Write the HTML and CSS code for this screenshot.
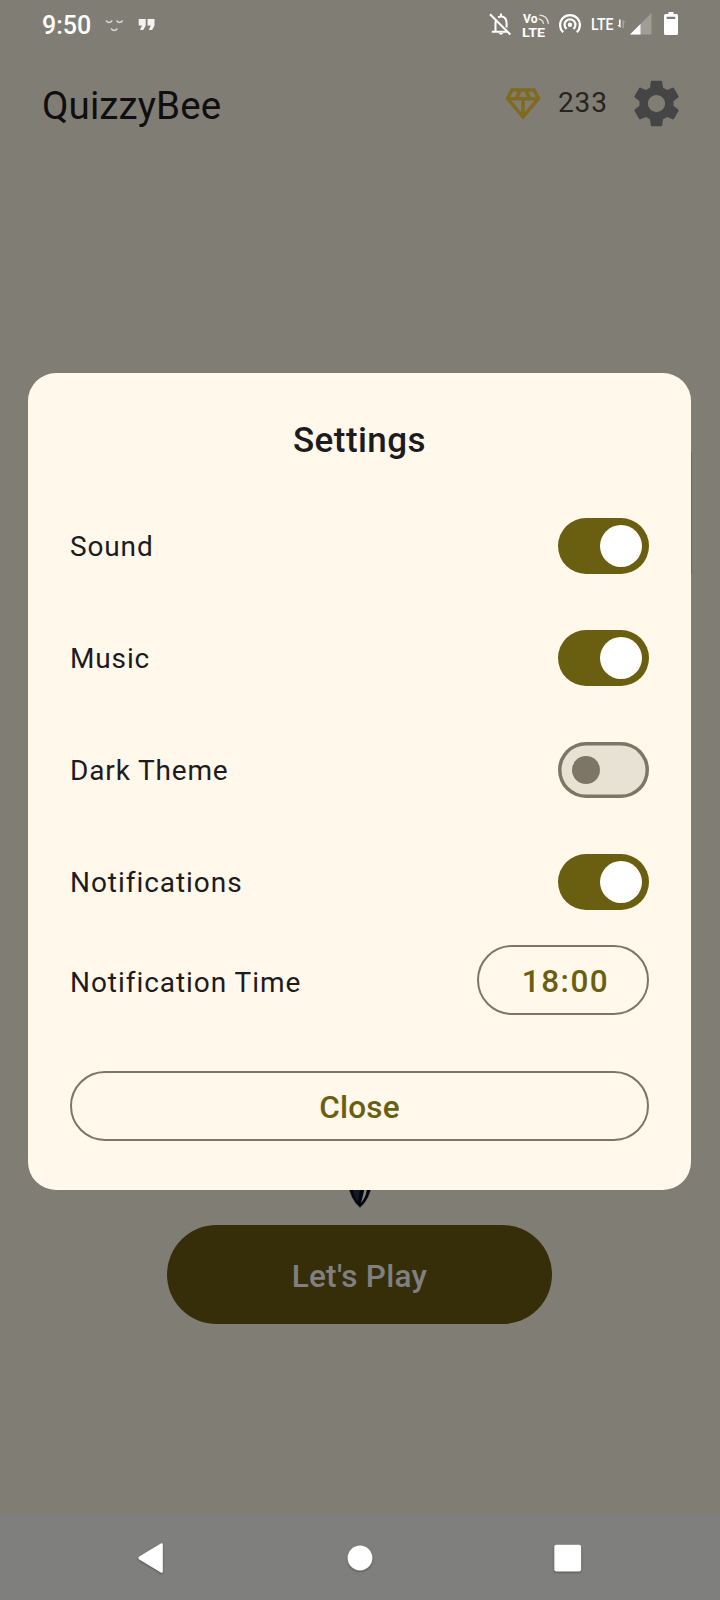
FILE: index.html
```
<!DOCTYPE html>
<html lang="en">
<head>
<meta charset="utf-8">
<title>QuizzyBee</title>
<link rel="stylesheet" href="styles.css">
</head>
<body>
<div class="screen">
  <div class="status-bar">
    <span class="clock">9:50</span>
    <svg class="status-left" width="64" height="48" viewBox="96 0 64 48">
      <path fill="none" stroke="#d8d6d2" stroke-width="1.4" d="M106 20.500q3 4 6.300 0M116.500 20.500q3 4 6.300 0M111 28.500q3.200 4 6.400 0"/>
      <path fill="#f4f3f2" d="M138.700 19h7v6.500l-2.400 4.500h-3.300l2-4.500h-3.300zM147.500 19h7v6.500l-2.400 4.500h-3.300l2-4.500h-3.300z"/>
    </svg>
    <svg class="status-right" width="240" height="48" viewBox="0 0 240 48">
      <!-- muted bell -->
      <g fill="none" stroke="#fff" stroke-width="2">
        <path d="M10 14.300l20.300 20.200M11.800 31.800h15M15.500 31.500v-8.500q0-2 .8-3.400M18 17.200q8-2.700 8.600 5.800v4.500M21 16.500v-3"/>
      </g>
      <path fill="#fff" d="M18.500 33h5q-2.500 3.600-5 0z"/>
      <!-- voice over LTE -->
      <text class="vo" x="43" y="22.500" textLength="14.500" lengthAdjust="spacingAndGlyphs">Vo</text>
      <text class="volte" x="42" y="36.700" textLength="23" lengthAdjust="spacingAndGlyphs">LTE</text>
      <path fill="none" stroke="#e4e3e1" stroke-width="1.300" d="M58.500 18.800q4.500.8 5 5M59.500 15.200q8 .6 9 8.600"/>
      <!-- hotspot -->
      <path fill="none" stroke="#fff" stroke-width="2.200" d="M83.200 32.200a9.900 9.900 0 1 1 13.600 0M86.600 28.900a5.400 5.400 0 1 1 6.800 0"/>
      <circle cx="90" cy="24.700" r="2.200" fill="#fff"/>
      <!-- mobile data -->
      <text class="lte" x="111" y="30" textLength="22.500" lengthAdjust="spacingAndGlyphs">LTE</text>
      <path fill="#fff" d="M139 19.500h1.600v8.500l-3.400-3h1.800z"/>
      <path fill="#a6a39f" d="M142.400 28v-8.500l3.200 3h-1.600v5.500z"/>
      <path fill="#a09d98" d="M150 34.500l21.500-21.500v21.500z"/>
      <path fill="#fff" d="M150 34.500l10.500-10.500v10.500z"/>
      <!-- battery -->
      <path fill="#fff" fill-rule="evenodd" d="M188.500 12h5v2h3q1.500 0 1.500 1.500v18q0 1.500-1.500 1.500h-11q-1.500 0-1.500-1.500v-18q0-1.500 1.500-1.500h3zM186.700 16.700v2.300h8.600v-2.300z"/>
    </svg>
  </div>

  <header class="app-bar">
    <h1 class="app-name">QuizzyBee</h1>
    <svg class="gem" width="42" height="42" viewBox="0 0 24 24">
      <path fill="#806a20" d="M19 3H5L2 9l10 12L22 9l-3-6zM9.620 8l1.500-3h1.760l1.500 3H9.620zM11 10v6.680L5.440 10H11zm2 0h5.560L13 16.680V10zm6.260-2h-2.650l-1.500-3h2.650l1.500 3zM6.240 5h2.650l-1.500 3H4.740l1.500-3z"/>
    </svg>
    <span class="gem-count">233</span>
    <svg class="gear" width="57" height="57" viewBox="0 0 24 24">
      <path fill="#454545" d="M19.140 12.940c.04-.3.06-.61.06-.94 0-.32-.02-.64-.07-.94l2.030-1.580c.18-.14.23-.41.12-.61l-1.920-3.320c-.12-.22-.37-.29-.59-.22l-2.390.96c-.5-.38-1.030-.7-1.620-.94l-.36-2.540c-.04-.24-.24-.41-.48-.41h-3.840c-.24 0-.43.17-.47.41l-.36 2.540c-.59.24-1.130.57-1.620.94l-2.390-.96c-.22-.08-.47 0-.59.22L2.740 8.870c-.12.21-.08.47.12.61l2.030 1.580c-.05.3-.09.63-.09.94s.02.64.07.94l-2.030 1.580c-.18.14-.23.41-.12.61l1.920 3.320c.12.22.37.29.59.22l2.390-.96c.5.38 1.030.7 1.620.94l.36 2.540c.05.24.24.41.48.41h3.840c.24 0 .44-.17.47-.41l.36-2.540c.59-.24 1.130-.56 1.620-.94l2.390.96c.22.08.47 0 .59-.22l1.920-3.320c.12-.22.07-.47-.12-.61l-2.010-1.580zM12 15.600c-1.980 0-3.600-1.620-3.600-3.600s1.620-3.600 3.600-3.600 3.600 1.620 3.600 3.600-1.620 3.600-3.600 3.600z"/>
    </svg>
  </header>

  <main class="home">
    <svg class="stinger" width="24" height="30" viewBox="0 0 24 30">
      <path fill="#02040e" stroke="#34343a" stroke-opacity=".6" stroke-width=".8" d="M.5 6Q2 21 12 29.500Q22 21 23.500 6z"/>
      <path fill="#111a24" d="M5 12q1 8 5 12.500l2-12.500z"/>
      <path fill="#80827f" d="M18.800 12q-.8 7.500-6.300 13.500 1.800-4 3.600-13.500z"/>
    </svg>
    <div class="play">Let's Play</div>
  </main>

  <nav class="nav-bar">
    <svg width="32" height="36" viewBox="0 0 32 36">
      <path class="nav-shape" d="M4.300 16.500Q2.500 18 4.300 19.500L25.800 32.500q2 .8 2-1V4.500q0-1.800-2-1z"/>
    </svg>
    <svg width="32" height="36" viewBox="0 0 32 36">
      <circle class="nav-shape" cx="16" cy="18" r="12.400"/>
    </svg>
    <svg width="32" height="36" viewBox="0 0 32 36">
      <rect class="nav-shape" x="2.300" y="4.800" width="26.800" height="26.600" rx="2"/>
    </svg>
  </nav>

  <span class="edge-handle"></span>

  <section class="dialog">
    <h2 class="dialog-title">Settings</h2>
    <div class="row"><span>Sound</span><i class="switch on"></i></div>
    <div class="row"><span>Music</span><i class="switch on"></i></div>
    <div class="row"><span>Dark Theme</span><i class="switch"></i></div>
    <div class="row wide"><span>Notifications</span><i class="switch on"></i></div>
    <div class="row wide time-row"><span class="time-label">Notification Time</span><div class="outlined time">18:00</div></div>
    <div class="outlined close">Close</div>
  </section>
</div>
</body>
</html>
```
FILE: styles.css
```
* { box-sizing: border-box; }

body {
  margin: 0;
  font-family: Roboto, sans-serif;
}

h1, h2 { margin: 0; }
svg { display: block; flex: none; }

.screen {
  position: relative;
  display: flex;
  flex-direction: column;
  width: 720px;
  height: 1600px;
  overflow: hidden;
  background: #807d75;
}

/* System status bar */
.status-bar {
  display: flex;
  height: 48px;
  padding-left: 42px;
  color: #fff;
}
.clock {
  width: 54px;
  font-size: 25px;
  font-weight: 500;
  line-height: 51px;
}
.status-right { margin-left: auto; }
.vo, .volte, .lte { fill: #fff; font-family: Roboto, sans-serif; }
.vo { font-size: 13px; font-weight: 700; }
.volte { font-size: 13.2px; font-weight: 700; }
.lte { font-size: 17px; font-weight: 500; }

/* App header */
.app-bar {
  display: flex;
  align-items: center;
  height: 111px;
  margin-bottom: 1px;
  padding: 0 35px 0 42px;
}
.app-name {
  flex: 1;
  padding-top: 5px;
  font-size: 38.5px;
  font-weight: 400;
  letter-spacing: .1px;
  line-height: 48px;
  color: #0f0e10;
}
.gem-count {
  width: 50px;
  margin: 0 20px 0 14px;
  font-size: 28px;
  letter-spacing: .875px;
  line-height: 34px;
  padding-bottom: 1px;
  color: #28241f;
}

/* Home screen behind the dialog */
.home {
  flex: 1;
  display: flex;
  flex-direction: column;
  align-items: center;
  justify-content: flex-end;
  padding: 0 1px 192px 0;
}
.stinger { margin-left: 1px; }
.play {
  width: 385px;
  height: 99px;
  margin-top: 17px;
  border-radius: 50px;
  background: #362e09;
  color: #808080;
  font-size: 31.5px;
  font-weight: 500;
  letter-spacing: .3px;
  line-height: 103px;
  text-align: center;
}

.nav-bar {
  display: flex;
  justify-content: space-between;
  height: 84px;
  padding: 24px 136px 0 135px;
  background: #7f7f7e;
}
.nav-shape {
  fill: #fff;
  filter: drop-shadow(0 1px 1px rgba(0, 0, 0, .35));
}

.edge-handle {
  position: absolute;
  left: 691px;
  top: 452px;
  width: 1px;
  height: 122px;
  background: #6a6761;
}

/* Settings dialog */
.dialog {
  position: absolute;
  left: 28px;
  top: 373px;
  width: 663px;
  height: 817px;
  padding: 42px;
  border-radius: 28px;
  background: #fff8eb;
  color: #1d1b20;
}
.dialog-title {
  height: 50px;
  margin-bottom: 53px;
  font-size: 35px;
  font-weight: 500;
  letter-spacing: .45px;
  line-height: 52px;
  text-align: center;
}
.row {
  display: flex;
  align-items: center;
  justify-content: space-between;
  height: 56px;
  margin-bottom: 56px;
  font-size: 28px;
  letter-spacing: .85px;
}
.row.wide { letter-spacing: .95px; }
.switch {
  display: flex;
  align-items: center;
  width: 91px;
  height: 56px;
  padding-left: 14px;
  border-radius: 28px;
  background: #e8e2d4;
  box-shadow: inset 0 0 0 3.5px #7d7667;
}
.switch::before {
  content: "";
  width: 28px;
  height: 28px;
  border-radius: 50%;
  background: #7d7667;
}
.switch.on {
  justify-content: flex-end;
  padding: 0 7px;
  background: #6a5f11;
  box-shadow: none;
}
.switch.on::before {
  width: 42px;
  height: 42px;
  background: #fff;
}
.row.time-row {
  height: 70px;
  margin-top: -21px;
}
.time-label { padding-top: 4px; }
.outlined {
  height: 70px;
  border: 2px solid #7d7667;
  border-radius: 35px;
  color: #6a5f11;
  font-size: 31.5px;
  font-weight: 500;
  letter-spacing: .2px;
  line-height: 69px;
  text-align: center;
}
.outlined.time {
  width: 172px;
  padding-left: 5px;
  letter-spacing: 1.5px;
}
```
